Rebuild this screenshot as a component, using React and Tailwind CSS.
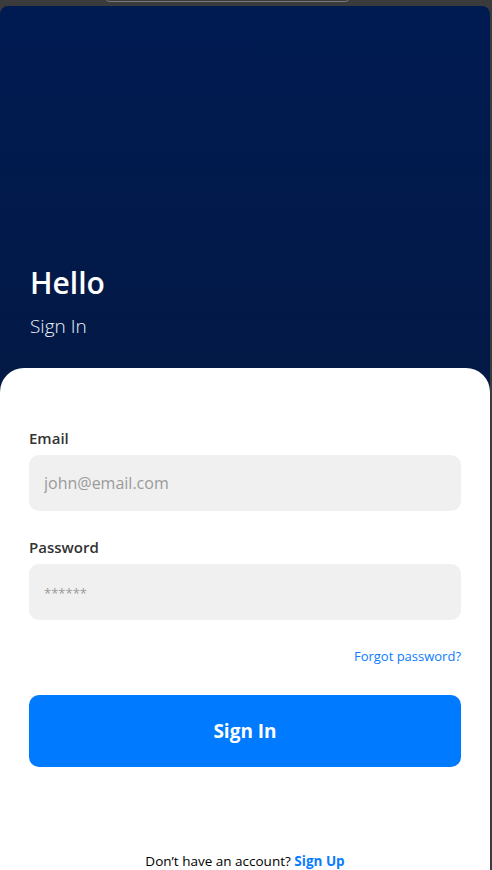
import React from 'react';

const font = { fontFamily: '"Open Sans", "Noto Sans", sans-serif' };

const Field = ({ label, placeholder, type = 'text', className = '', inputClass = '' }) => (
  <div className={className}>
    <label className="block text-[15px] leading-[20px] font-semibold text-[#333333]">{label}</label>
    <input
      type={type}
      placeholder={placeholder}
      className={`mt-[7px] w-full h-[56px] rounded-[10px] bg-[#f0f0f0] px-[15px] text-[16px] text-[#333] placeholder-[#9a9a9a] outline-none ${inputClass}`}
    />
  </div>
);

export default function App() {
  return (
    <div style={font} className="relative w-[492px] h-[870px] bg-[#3b3b3b] pt-[6px] pr-[2px] overflow-hidden">
      {/* notch outline at the very top */}
      <div className="absolute left-[104px] top-[-12px] w-[247px] h-[14px] rounded-b-[6px] border border-[#7a7a7a]" />

      <div className="h-full flex flex-col rounded-t-[8px] overflow-hidden bg-gradient-to-b from-[#001b52] to-[#061636]">
        <div className="h-[362px] flex flex-col justify-end px-[30px] pb-[29px]">
          <h1 className="text-[30px] leading-[36px] font-semibold text-white">Hello</h1>
          <p className="mt-[12px] text-[19px] leading-[26px] font-light text-[#eaf4ff]">Sign In</p>
        </div>

        <div className="flex-1 flex flex-col bg-white rounded-t-[24px] px-[29px] pt-[60px]">
          <Field label="Email" placeholder="john@email.com" />
          <Field
            label="Password"
            placeholder="******"
            type="password"
            className="mt-[26px]"
            inputClass="placeholder:text-[13px]"
          />

          <div className="mt-[28px] flex justify-end">
            <a href="#" className="text-[13px] leading-[17px] text-[#0a7cff]">Forgot password?</a>
          </div>

          <button className="mt-[30px] h-[72px] w-full rounded-[10px] bg-[#007aff] text-white text-[19px] font-bold">
            Sign In
          </button>

          <p className="mt-auto text-center text-[13.5px] leading-[17px] text-black">
            Don’t have an account? <a href="#" className="font-bold text-[#0a7cff]">Sign Up</a>
          </p>
        </div>
      </div>
    </div>
  );
}
